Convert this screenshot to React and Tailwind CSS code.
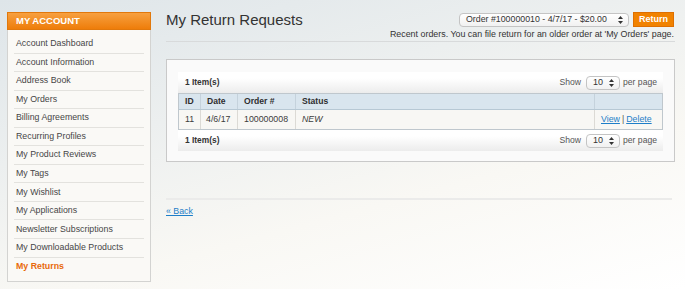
import React from "react";

const links = [
  "Account Dashboard",
  "Account Information",
  "Address Book",
  "My Orders",
  "Billing Agreements",
  "Recurring Profiles",
  "My Product Reviews",
  "My Tags",
  "My Wishlist",
  "My Applications",
  "Newsletter Subscriptions",
  "My Downloadable Products",
];

function Arrows() {
  return (
    <svg width="5" height="8" viewBox="0 0 5 8" className="shrink-0">
      <path d="M2.5 0 L5 3 L0 3 Z" fill="#333" />
      <path d="M2.5 8 L5 5 L0 5 Z" fill="#333" />
    </svg>
  );
}

function PerPage() {
  return (
    <div className="flex items-center text-[8.6px] text-[#555]">
      <span>Show</span>
      <div className="ml-[5px] mr-[3px] flex items-center justify-between w-[34px] h-[14px] pl-[6px] pr-[5px] rounded-[4px] border border-[#c4c4c4] bg-[linear-gradient(#ffffff,#f1f1f1)] text-[9px] text-[#333]">
        <span>10</span>
        <Arrows />
      </div>
      <span>per page</span>
    </div>
  );
}

function Toolbar() {
  return (
    <div className="h-[21px] flex items-center justify-between pl-[7px] pr-[6px] bg-[linear-gradient(#ffffff_30%,#ececec)]">
      <span className="text-[8.4px] font-bold text-[#333]">1 Item(s)</span>
      <PerPage />
    </div>
  );
}

export default function App() {
  return (
    <div className="w-[685px] h-[289px] overflow-hidden flex items-start font-['Liberation_Sans',Arial,sans-serif] bg-[linear-gradient(165deg,#dee5e9_0%,#ecefef_35%,#f9f8f4_65%,#ffffff_100%)]">
      {/* sidebar */}
      <aside className="ml-[7px] mt-[12px] w-[144px] h-[270px] border border-[#d3d3d1] bg-[#faf9f6]">
        <div className="-mx-px -mt-px h-[18px] pl-[8px] flex items-center bg-[linear-gradient(#f7a040,#ee7d0a)] border border-[#e1780c] text-white text-[9.5px] font-bold uppercase">
          My Account
        </div>
        <ul className="px-[6px] pt-[5px]">
          {links.map((l) => (
            <li
              key={l}
              className="h-[18.55px] flex items-center pl-[2px] border-b border-[#e3e2de] text-[8.8px] text-[#464646]"
            >
              {l}
            </li>
          ))}
          <li className="h-[18.5px] flex items-center pl-[2px] text-[8.8px] font-bold text-[#e8690a]">
            My Returns
          </li>
        </ul>
      </aside>

      {/* main */}
      <main className="ml-[15px] w-[509px]">
        <div className="h-[42px] flex justify-between border-b border-[#d8dadb]">
          <h1 className="pt-[11px] text-[15px] leading-[18px] text-[#333]">
            My Return Requests
          </h1>
          <div className="pt-[12px] pr-px flex flex-col items-end">
            <div className="flex items-center">
              <div className="w-[170px] h-[14px] flex items-center justify-between pl-[6px] pr-[5px] rounded-[4px] border border-[#c4c4c4] bg-[linear-gradient(#ffffff,#f1f1f1)] text-[8.8px] text-[#333]">
                <span>Order #100000010 - 4/7/17 - $20.00</span>
                <Arrows />
              </div>
              <button className="ml-[4px] w-[41px] h-[15px] bg-[#f18200] border border-[#de6f00] text-white text-[9px] font-bold leading-none">
                Return
              </button>
            </div>
            <p className="mt-[2px] text-[8.9px] leading-[10px] text-[#333]">
              Recent orders. You can file return for an older order at 'My Orders' page.
            </p>
          </div>
        </div>

        <div className="mt-[17px] border border-[#c9c9c9] bg-[#fafafa] px-[11px] pt-[12px] pb-[10px]">
          <Toolbar />
          <div className="border border-[#bfc7cd]">
            <div className="grid grid-cols-[22px_37px_58px_1fr_67px] h-[16px] bg-[#d9e5ee] border-b border-[#b7c8d4] text-[8.6px] font-bold text-[#2e2e2e]">
              <div className="pl-[6px] flex items-center border-r border-[#c5d2dc]">ID</div>
              <div className="pl-[6px] flex items-center border-r border-[#c5d2dc]">Date</div>
              <div className="pl-[6px] flex items-center border-r border-[#c5d2dc]">Order #</div>
              <div className="pl-[6px] flex items-center border-r border-[#c5d2dc]">Status</div>
              <div />
            </div>
            <div className="grid grid-cols-[22px_37px_58px_1fr_67px] h-[19px] bg-[#f8f7f4] text-[8.8px] text-[#3c3c3c]">
              <div className="pl-[6px] flex items-center border-r border-[#dcdad5]">11</div>
              <div className="pl-[5px] flex items-center border-r border-[#dcdad5]">4/6/17</div>
              <div className="pl-[6px] flex items-center border-r border-[#dcdad5]">100000008</div>
              <div className="pl-[6px] flex items-center border-r border-[#dcdad5] italic">NEW</div>
              <div className="pl-[6px] flex items-center text-[#1e7ec8]">
                <a href="#" className="underline">View</a>
                <span className="mx-[2px] text-[#555]">|</span>
                <a href="#" className="underline">Delete</a>
              </div>
            </div>
          </div>
          <Toolbar />
        </div>

        <div className="mt-[36px] h-[2px] w-[506px] bg-[#ebebea]" />
        <a href="#" className="block mt-[6px] text-[8.8px] leading-[10px] text-[#1e7ec8] underline">
          « Back
        </a>
      </main>
    </div>
  );
}
